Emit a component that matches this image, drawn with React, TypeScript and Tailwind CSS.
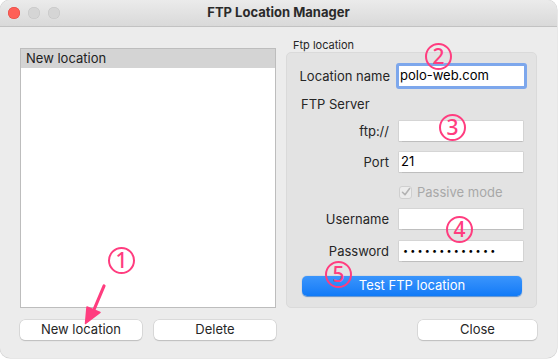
import React from "react";

const font = { fontFamily: "Inter, 'Liberation Sans', sans-serif" };

function Field({ label, children, className = "" }: { label: string; children?: React.ReactNode; className?: string }) {
  return (
    <div className={`flex h-[20px] items-center ${className}`}>
      <div className="w-[103px] pr-[1px] text-right text-[13px] leading-[16px] text-[#262626]">{label}</div>
      <div className="ml-[9px] flex h-[20px] w-[124px] items-center bg-white px-[2px] text-[13px] text-black shadow-[0_0_0_0.5px_#c8c8c8,0_0.5px_1px_#b4b4b4]">
        {children}
      </div>
    </div>
  );
}

function Mark({ n, className }: { n: string; className: string }) {
  return (
    <div
      className={`absolute flex h-[27px] w-[27px] items-center justify-center rounded-full border-[2px] border-[#ff3d7f] text-[21px] font-medium leading-none text-[#ff3d7f] ${className}`}
      style={{ fontFamily: "'Noto Sans', Inter, sans-serif" }}
    >
      {n}
    </div>
  );
}

export default function App() {
  return (
    <div className="h-[359px] w-[558px] bg-white" style={font}>
      <div className="relative h-[358px] w-[557px] overflow-hidden rounded-[10px] bg-[#ececec] shadow-[0_0_0_0.5px_#d0d0d0]">
        {/* title bar */}
        <div className="relative flex h-[27px] items-center border-b border-[#c2c2c2] bg-gradient-to-b from-[#ebebeb] to-[#d9d9d9]">
          <div className="ml-[8px] flex gap-[8px]">
            <div className="h-[12px] w-[12px] rounded-full bg-[#fe5f57] shadow-[inset_0_0_0_0.5px_#e0443e]" />
            <div className="h-[12px] w-[12px] rounded-full bg-[#d5d5d5] shadow-[inset_0_0_0_0.5px_#c4c4c4]" />
            <div className="h-[12px] w-[12px] rounded-full bg-[#d5d5d5] shadow-[inset_0_0_0_0.5px_#c4c4c4]" />
          </div>
          <div className="absolute inset-x-0 text-center text-[13px] font-bold text-[#2a2a2a]">FTP Location Manager</div>
        </div>

        <div className="flex">
          {/* left column */}
          <div className="ml-[20px] mt-[21px] w-[256px]">
            <div className="h-[260px] border border-[#bdbdbd] bg-white">
              <div className="flex h-[19px] items-center bg-[#d4d4d4] pl-[5px] text-[13px] text-[#222]">New location</div>
            </div>
            <div className="mt-[12px] flex justify-between">
              <button className="h-[20px] w-[122px] rounded-[5px] bg-white text-[13px] text-[#262626] shadow-[0_0_0_0.5px_#c8c8c8,0_1px_1px_#b8b8b8]">
                New location
              </button>
              <button className="h-[20px] w-[122px] rounded-[5px] bg-white text-[13px] text-[#262626] shadow-[0_0_0_0.5px_#c8c8c8,0_1px_1px_#b8b8b8]">
                Delete
              </button>
            </div>
          </div>

          {/* right column */}
          <div className="ml-[10px] mt-[11px] w-[251px]">
            <div className="ml-[7px] h-[14px] text-[11px] leading-[14px] text-[#262626]">Ftp location</div>
            <div className="h-[256px] rounded-[5px] border border-[#dadada] bg-[#e3e3e3]">
              <div className="mt-[10px] flex h-[26px] items-center">
                <div className="w-[103px] text-right text-[13px] leading-[16px] text-[#262626]">Location name</div>
                <div className="ml-[6px] flex h-[26px] w-[131px] items-center rounded-[3px] border-[3px] border-[#7da7ec] bg-white px-[1px] text-[13px] text-black">
                  polo-web.com
                </div>
              </div>
              <div className="ml-[14px] mt-[7px] h-[16px] text-[13px] leading-[16px] text-[#262626]">FTP Server</div>
              <Field label="ftp://" className="mt-[9px]" />
              <Field label="Port" className="mt-[11px]">21</Field>
              <div className="mt-[12px] flex h-[16px] items-center">
                <div className="ml-[112px] flex h-[13px] w-[13px] items-center justify-center rounded-[3px] border border-[#cfcfcf] bg-[#ececec]">
                  <svg width="10" height="10" viewBox="0 0 10 10">
                    <path d="M1.5 5.3 L4 7.8 L8.6 1.6" fill="none" stroke="#b3b3b3" strokeWidth="1.6" strokeLinecap="round" strokeLinejoin="round" />
                  </svg>
                </div>
                <div className="ml-[5px] text-[13px] leading-[16px] text-[#a8a8a8]">Passive mode</div>
              </div>
              <Field label="Username" className="mt-[9px]" />
              <Field label="Password" className="mt-[12px]">
                <span className="pl-[2px] text-[9px] tracking-[2.2px]">•••••••••••••</span>
              </Field>
              <button className="ml-[15px] mt-[15px] flex h-[20px] w-[220px] items-center justify-center rounded-[5px] bg-gradient-to-b from-[#3a95fc] to-[#0f7af7] text-[13px] text-white shadow-[0_0.5px_1px_#5a8fd0]">
                Test FTP location
              </button>
            </div>
            <div className="mt-[12px] flex justify-end">
              <button className="h-[20px] w-[119px] rounded-[5px] bg-white text-[13px] text-[#262626] shadow-[0_0_0_0.5px_#c8c8c8,0_1px_1px_#b8b8b8]">
                Close
              </button>
            </div>
          </div>
        </div>

        {/* annotations */}
        <Mark n="1" className="left-[108px] top-[247px]" />
        <Mark n="2" className="left-[425px] top-[43px]" />
        <Mark n="3" className="left-[439px] top-[114px]" />
        <Mark n="4" className="left-[446px] top-[216px]" />
        <Mark n="5" className="left-[325px] top-[261px]" />
        <svg className="absolute left-[80px] top-[280px]" width="30" height="48" viewBox="0 0 30 48">
          <path d="M24 6 L13 32" stroke="#ff3d7f" strokeWidth="3.2" strokeLinecap="round" />
          <path d="M5.5 43.5 L7 27 L20 32.5 Z" fill="#ff3d7f" stroke="#ff3d7f" strokeWidth="1.5" strokeLinejoin="round" />
        </svg>
      </div>
    </div>
  );
}
